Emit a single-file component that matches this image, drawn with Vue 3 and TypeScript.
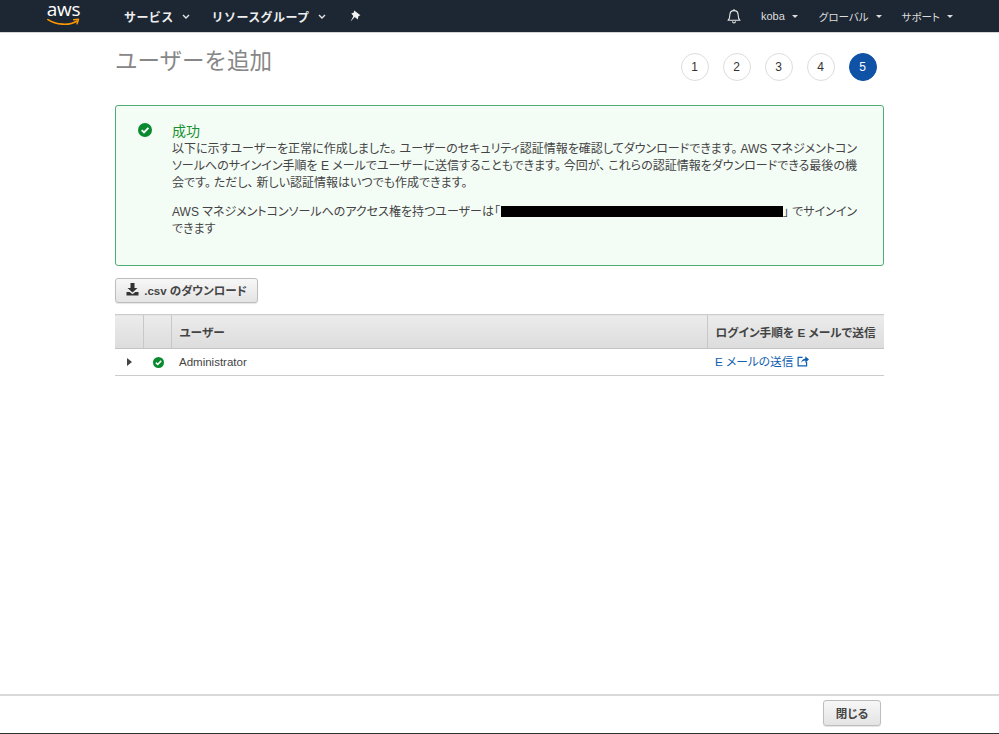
<script setup lang="ts">
const steps: number[] = [1, 2, 3, 4, 5]
</script>

<template>
  <div class="page">
    <header class="nav">
      <div class="logo">
        <span class="logo-text">aws</span>
        <svg class="smile" viewBox="0 0 34 9" width="33" height="9">
          <path d="M1 1.5C9 7 23 8 30.5 3.2" fill="none" stroke="#f90" stroke-width="1.7" stroke-linecap="round" />
          <path d="M27.5 1.6L32.5 1.2L31 5.8" fill="none" stroke="#f90" stroke-width="1.5" stroke-linejoin="round" stroke-linecap="round" />
        </svg>
      </div>
      <div class="nav-main">
        <span class="nav-item">サービス
          <svg class="chev" viewBox="0 0 8 5" width="8" height="5"><path d="M1 1l3 3 3-3" fill="none" stroke="#e6e6e6" stroke-width="1.4" /></svg>
        </span>
        <span class="nav-item second">リソースグループ
          <svg class="chev" viewBox="0 0 8 5" width="8" height="5"><path d="M1 1l3 3 3-3" fill="none" stroke="#e6e6e6" stroke-width="1.4" /></svg>
        </span>
        <svg class="pin" viewBox="0 0 12 12" width="12" height="12">
          <path d="M5.2 .4L11.4 5.2 9.4 6.2 8.8 9.6 5.8 7 1.6 11.4 4.4 6 2.2 3.4 4.6 2.8Z" fill="#f2f2f2" />
        </svg>
      </div>
      <div class="nav-right">
        <svg class="bell" viewBox="0 0 14 16" width="14" height="16">
          <path d="M1 12.3c1.4-1.2 1.8-2.6 1.8-4.8C2.8 4.7 4.3 2.6 7 2.6s4.2 2.1 4.2 4.9c0 2.2.4 3.6 1.8 4.8Z" fill="none" stroke="#e6e6e6" stroke-width="1.1" stroke-linejoin="round" />
          <path d="M7 1v1.6M5.4 13.4c.2 1 .8 1.6 1.6 1.6s1.4-.6 1.6-1.6" fill="none" stroke="#e6e6e6" stroke-width="1.1" />
        </svg>
        <span class="small-item user">koba<i class="caret"></i></span>
        <span class="small-item region">グローバル<i class="caret"></i></span>
        <span class="small-item support">サポート<i class="caret"></i></span>
      </div>
    </header>

    <main class="main">
      <div class="title-row">
        <h1 class="title">ユーザーを追加</h1>
        <ol class="steps">
          <li v-for="s in steps" :key="s" class="step" :class="{ active: s === 5 }">{{ s }}</li>
        </ol>
      </div>

      <section class="alert">
        <svg class="alert-icon" viewBox="0 0 14 14" width="14" height="14">
          <circle cx="7" cy="7" r="7" fill="#0a8a2f" />
          <path d="M3.7 7.2l2.3 2.3 4.4-4.6" fill="none" stroke="#fff" stroke-width="1.9" />
        </svg>
        <div class="alert-body">
          <h2 class="alert-title">成功</h2>
          <p class="alert-text">以下に示すユーザーを正常に作成しました<span class="pn">。</span>ユーザーのセキュリティ認証情報を確認してダウンロードできます<span class="pn">。</span>AWS マネジメントコン<br />ソールへのサインイン手順を E メールでユーザーに送信することもできます<span class="pn">。</span>今回が<span class="pn">、</span>これらの認証情報をダウンロードできる最後の機<br />会です<span class="pn">。</span>ただし<span class="pn">、</span>新しい認証情報はいつでも作成できます。</p>
          <p class="alert-text second-para">AWS マネジメントコンソールへのアクセス権を持つユーザーは「<span class="redact"></span>」 でサインイン<br />できます</p>
        </div>
      </section>

      <button class="btn download" type="button">
        <svg viewBox="0 0 13 13" width="13" height="13">
          <path d="M4.5 0h4v5h3L6.5 9.6 1.5 5h3Z" fill="#333" />
          <path d="M.5 9h3.2l2.8 2.2L9.3 9h3.2v3.6H.5Z" fill="#333" />
        </svg>
        <span>.csv のダウンロード</span>
      </button>

      <table class="table">
        <thead>
          <tr>
            <th class="col-a"></th>
            <th class="col-b"></th>
            <th class="col-user">ユーザー</th>
            <th class="col-send">ログイン手順を E メールで送信</th>
          </tr>
        </thead>
        <tbody>
          <tr>
            <td class="cell-center"><i class="tri"></i></td>
            <td class="cell-center">
              <svg class="row-check" viewBox="0 0 14 14" width="11" height="11">
                <circle cx="7" cy="7" r="7" fill="#0a8a2f" />
                <path d="M3.7 7.2l2.3 2.3 4.4-4.6" fill="none" stroke="#fff" stroke-width="2" />
              </svg>
            </td>
            <td class="cell-user"><span class="user-name">Administrator</span></td>
            <td class="cell-send">
              <a class="link">E メールの送信
                <svg class="ext" viewBox="0 0 13 13" width="12" height="12">
                  <path d="M6 2.6H1.2v9.2h9.2V7.6" fill="none" stroke="#0f5eb0" stroke-width="1.3" />
                  <path d="M4.4 8.4C5 5.6 6.8 4 9 3.8V1.4L13 5 9 8.4V6C7.2 6 5.6 6.8 4.4 8.4Z" fill="#0f5eb0" />
                </svg>
              </a>
            </td>
          </tr>
        </tbody>
      </table>
    </main>

    <footer class="footer">
      <button class="btn close" type="button">閉じる</button>
    </footer>
  </div>
</template>

<style>
html, body { margin: 0; overflow: hidden; background: #fff; }
</style>

<style scoped>
.page {
  width: 999px;
  height: 734px;
  display: flex;
  flex-direction: column;
  font-family: "Liberation Sans", "Noto Sans CJK JP", sans-serif;
  font-feature-settings: "palt";
  color: #444;
  border-bottom: 1px solid #333;
  box-sizing: border-box;
}
.nav {
  flex: none;
  height: 33px;
  box-sizing: border-box;
  background: #1d2733;
  border-bottom: 1px solid #d5d5d5;
  display: flex;
  align-items: center;
  color: #f0f0f0;
}
.logo {
  width: 33px;
  margin-left: 47px;
  display: flex;
  flex-direction: column;
  align-items: center;
  height: 32px;
}
.logo-text {
  font-family: "Open Sans", sans-serif;
  font-size: 19px;
  line-height: 19px;
  color: #fff;
  letter-spacing: -0.3px;
}
.smile { margin-top: -1px; }
.nav-main {
  margin-left: 44px;
  display: flex;
  align-items: center;
}
.nav-item {
  font-size: 12px;
  font-weight: 700;
  letter-spacing: 0.4px;
  color: #eee;
  display: flex;
  align-items: center;
  gap: 8px;
  font-feature-settings: normal;
}
.nav-item.second { margin-left: 22px; }
.pin { margin-left: 23px; }
.nav-right {
  margin-left: auto;
  margin-right: 46px;
  display: flex;
  align-items: center;
  font-size: 10.5px;
  color: #ddd;
}
.bell { margin-right: 20px; }
.small-item {
  display: flex;
  align-items: center;
  gap: 7px;
  white-space: nowrap;
}
.user { font-size: 11px; }
.region { margin-left: 21px; }
.support { margin-left: 20px; }
.caret {
  width: 0;
  height: 0;
  border-left: 3px solid transparent;
  border-right: 3px solid transparent;
  border-top: 3px solid #ddd;
}
.main {
  flex: 1;
  padding: 0 115px;
  min-height: 0;
}
.title-row {
  display: flex;
  justify-content: space-between;
  height: 72px;
}
.title {
  margin: 14px 0 0;
  font-size: 22.5px;
  line-height: 30px;
  font-weight: 400;
  color: #878787;
  font-feature-settings: normal;
}
.steps {
  list-style: none;
  margin: 20px 7.5px 0 0;
  padding: 0;
  display: flex;
  gap: 14px;
}
.step {
  width: 28px;
  height: 28px;
  box-sizing: border-box;
  border: 1px solid #ddd;
  border-radius: 50%;
  display: flex;
  align-items: center;
  justify-content: center;
  font-size: 12px;
  color: #333;
}
.step.active {
  background: #0f52a6;
  border-color: #0f52a6;
  color: #fff;
}
.alert {
  height: 161px;
  box-sizing: border-box;
  background: #f4fcf6;
  border: 1px solid #50ad72;
  border-radius: 3px;
  display: flex;
  padding: 16px 20px 0 22px;
}
.alert-icon { flex: none; margin-top: 1px; }
.alert-body { margin-left: 20px; flex: 1; min-width: 0; }
.alert-title {
  margin: 0;
  font-size: 14px;
  line-height: 18px;
  font-weight: 400;
  color: #17912f;
  font-feature-settings: normal;
}
.alert-text {
  margin: 0;
  font-size: 12px;
  line-height: 17px;
  color: #444;
  white-space: nowrap;
  padding-top: 1px;
}
.pn { margin-right: 3px; }
.second-para { margin-top: 11px; }
.redact {
  display: inline-block;
  width: 282px;
  height: 11px;
  background: #000;
  vertical-align: -1px;
  margin-left: 1px;
}
.btn {
  font-family: inherit;
  font-feature-settings: "palt";
  font-weight: 700;
  font-size: 11.5px;
  color: #444;
  background: linear-gradient(#f7f7f7, #e4e4e4);
  border: 1px solid #bdbdbd;
  border-radius: 3px;
  box-shadow: 0 1px 1px rgba(0, 0, 0, 0.1);
  display: flex;
  align-items: center;
  justify-content: center;
  padding: 0 0 1px;
  box-sizing: border-box;
}
.download {
  margin-top: 12px;
  width: 143px;
  height: 25px;
  gap: 5px;
  padding-bottom: 2px;
}
.table {
  margin-top: 11px;
  width: 769px;
  border-collapse: collapse;
  table-layout: fixed;
  font-size: 11.7px;
}
.table th {
  height: 34px;
  padding: 0 8px;
  box-sizing: border-box;
  background: linear-gradient(#ececec, #dcdcdc);
  border-top: 1px solid #ccc;
  border-bottom: 1px solid #c4c4c4;
  border-left: 1px solid #c8c8c8;
  text-align: left;
  font-weight: 700;
  color: #444;
  white-space: nowrap;
}
.table th:first-child { border-left: none; }
.col-a { width: 28px; }
.col-b { width: 28px; }
.col-send { width: 177px; }
.table td {
  height: 27px;
  padding: 0;
  box-sizing: border-box;
  border-bottom: 1px solid #ccc;
  vertical-align: middle;
}
.cell-center { text-align: center; line-height: 0; }
.tri {
  display: inline-block;
  width: 0;
  height: 0;
  border-top: 4px solid transparent;
  border-bottom: 4px solid transparent;
  border-left: 5px solid #444;
}
.row-check { margin-left: 2px; }
.cell-user { padding-left: 8px !important; color: #444; font-size: 11.5px; }
.user-name { display: block; margin-top: -1px; }
.cell-send { padding-left: 8px !important; }
.link {
  color: #0f5eb0;
  display: inline-flex;
  align-items: center;
  gap: 4px;
  line-height: 14px;
  vertical-align: 2px;
}
.ext { margin-top: -1px; }
.footer {
  flex: none;
  height: 39px;
  box-sizing: border-box;
  border-top: 2px solid #d9d9d9;
  display: flex;
  justify-content: flex-end;
  padding: 4px 118px 0 0;
}
.close {
  width: 58px;
  height: 26px;
}
</style>
